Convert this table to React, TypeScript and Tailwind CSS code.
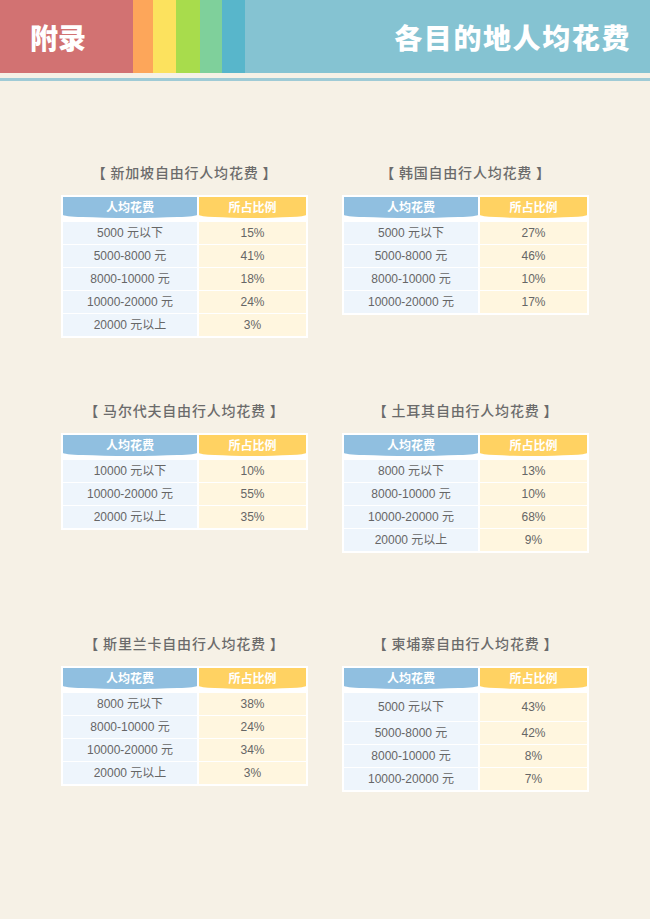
import React from "react";

type Table = {
  title: string;
  rows: [string, string][];
  tallFirst?: boolean;
};

const tables: Table[] = [
  {
    title: "新加坡自由行人均花费",
    rows: [
      ["5000 元以下", "15%"],
      ["5000-8000 元", "41%"],
      ["8000-10000 元", "18%"],
      ["10000-20000 元", "24%"],
      ["20000 元以上", "3%"],
    ],
  },
  {
    title: "韩国自由行人均花费",
    rows: [
      ["5000 元以下", "27%"],
      ["5000-8000 元", "46%"],
      ["8000-10000 元", "10%"],
      ["10000-20000 元", "17%"],
    ],
  },
  {
    title: "马尔代夫自由行人均花费",
    rows: [
      ["10000 元以下", "10%"],
      ["10000-20000 元", "55%"],
      ["20000 元以上", "35%"],
    ],
  },
  {
    title: "土耳其自由行人均花费",
    rows: [
      ["8000 元以下", "13%"],
      ["8000-10000 元", "10%"],
      ["10000-20000 元", "68%"],
      ["20000 元以上", "9%"],
    ],
  },
  {
    title: "斯里兰卡自由行人均花费",
    rows: [
      ["8000 元以下", "38%"],
      ["8000-10000 元", "24%"],
      ["10000-20000 元", "34%"],
      ["20000 元以上", "3%"],
    ],
  },
  {
    title: "柬埔寨自由行人均花费",
    tallFirst: true,
    rows: [
      ["5000 元以下", "43%"],
      ["5000-8000 元", "42%"],
      ["8000-10000 元", "8%"],
      ["10000-20000 元", "7%"],
    ],
  },
];

const font = {
  fontFamily: '"Liberation Sans", "Noto Sans CJK SC", sans-serif',
};
const cjk = { fontFamily: '"Noto Sans CJK SC", sans-serif' };

function Block({ t }: { t: Table }) {
  return (
    <div className="flex flex-col items-center w-[247px]">
      <div
        className="h-[20px] leading-[20px] text-[14px] font-medium tracking-[0.8px] text-[#6b6b6b] whitespace-pre"
        style={cjk}
      >
        {"【 " + t.title + " 】"}
      </div>
      <div className="mt-[13px] w-[247px] bg-white p-[2px] flex flex-col gap-[1px]">
        <div className="flex gap-[2px] h-[21px] mb-[3px]">
          <div
            className="w-[134px] bg-[#90bfe0] rounded-bl-[50%_3px] rounded-br-[50%_3px] text-white text-[12px] font-bold flex items-center justify-center pb-[1px]"
            style={cjk}
          >
            人均花费
          </div>
          <div
            className="flex-1 bg-[#ffd262] rounded-bl-[50%_3px] rounded-br-[50%_3px] text-white text-[12px] font-bold flex items-center justify-center pb-[1px]"
            style={cjk}
          >
            所占比例
          </div>
        </div>
        {t.rows.map((r, i) => (
          <div
            key={i}
            className={
              "flex gap-[2px] text-[12px] text-[#666666] " +
              (t.tallFirst && i === 0 ? "h-[28px]" : "h-[22px]")
            }
            style={font}
          >
            <div className="w-[134px] bg-[#eef5fc] flex items-center justify-center">
              {r[0]}
            </div>
            <div className="flex-1 bg-[#fff6df] flex items-center justify-center">
              {r[1]}
            </div>
          </div>
        ))}
      </div>
    </div>
  );
}

export default function App() {
  return (
    <div className="w-[650px] h-[919px] bg-[#f6f1e6] overflow-hidden flex flex-col">
      <div className="flex h-[73px]">
        <div className="w-[133px] bg-[#d27272] flex items-center pl-[30px]">
          <span
            className="text-white text-[28px] font-black leading-none pt-[1px]"
            style={cjk}
          >
            附录
          </span>
        </div>
        <div className="w-[20px] bg-[#fda65a]" />
        <div className="w-[23px] bg-[#fce25e]" />
        <div className="w-[24px] bg-[#a8dc4c]" />
        <div className="w-[22px] bg-[#7fd09b]" />
        <div className="w-[23px] bg-[#58b6cb]" />
        <div className="flex-1 bg-[#85c3d2] flex items-center justify-end pr-[19px]">
          <span
            className="text-white text-[28px] font-black leading-none tracking-[1.6px] pt-[1px]"
            style={cjk}
          >
            各目的地人均花费
          </span>
        </div>
      </div>
      <div className="h-[5px]" />
      <div className="h-[3px] bg-[#9fcbd6]" />
      <div className="flex flex-col px-[61px] pt-[81px]">
        <div className="flex justify-between items-start">
          <Block t={tables[0]} />
          <Block t={tables[1]} />
        </div>
        <div className="flex justify-between items-start mt-[62px]">
          <Block t={tables[2]} />
          <Block t={tables[3]} />
        </div>
        <div className="flex justify-between items-start mt-[80px]">
          <Block t={tables[4]} />
          <Block t={tables[5]} />
        </div>
      </div>
    </div>
  );
}
